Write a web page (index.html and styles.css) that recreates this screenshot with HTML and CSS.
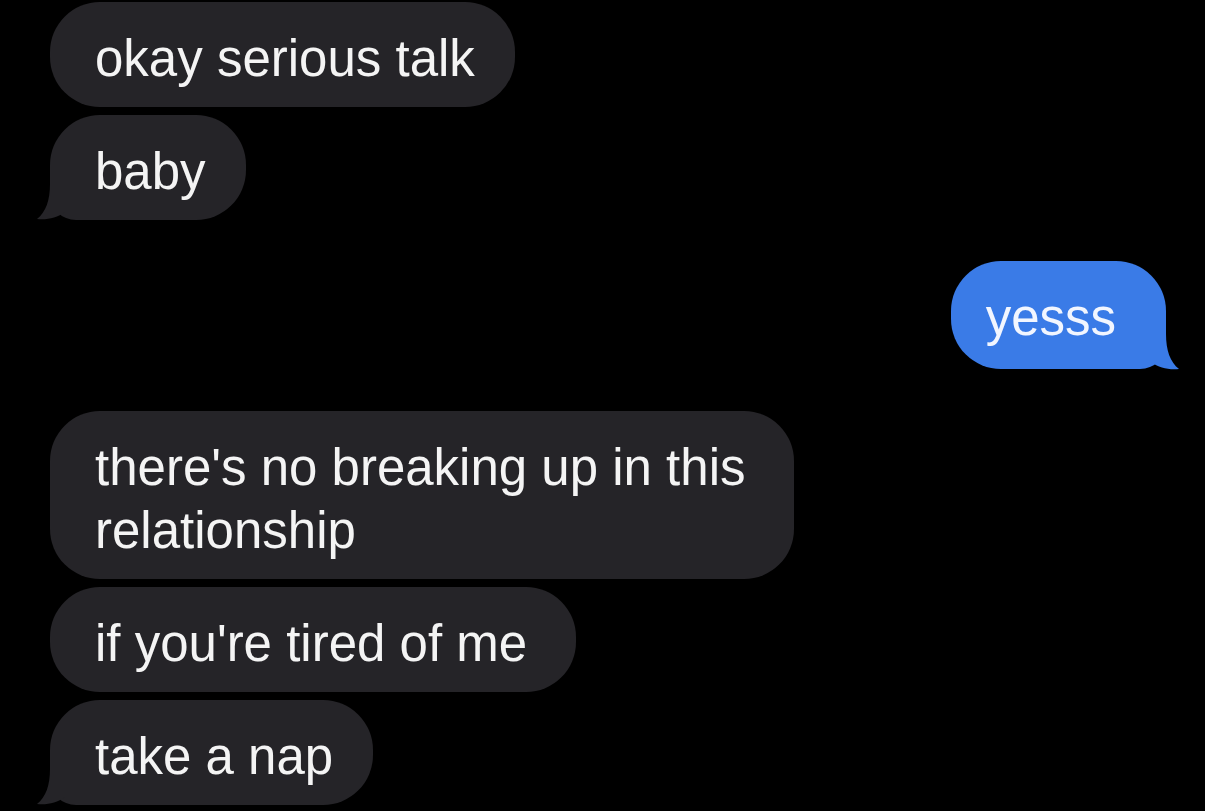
FILE: index.html
```html
<!DOCTYPE html>
<html lang="en">
<head>
  <meta charset="UTF-8" />
  <meta name="viewport" content="width=device-width, initial-scale=1.0" />
  <title>Messages</title>
  <link rel="stylesheet" href="styles.css">
</head>
<body>
  <!-- Conversation -->
  <div class="thread">
    <div class="msg in">okay serious talk</div>
    <div class="msg in has-tail">baby
      <svg class="tail" viewBox="0 0 40 36" width="40" height="36"><path d="M13 0 C13 16 9 28 0 35 C10 36 20 34 28 28 L40 28 L40 0 Z" /></svg>
    </div>
    <div class="msg out has-tail">yesss
      <svg class="tail" viewBox="0 0 40 36" width="40" height="36"><path d="M27 0 C27 16 31 28 40 35 C30 36 20 34 12 28 L0 28 L0 0 Z" /></svg>
    </div>
    <div class="msg in wide">there's no breaking up in this<br>relationship</div>
    <div class="msg in wide">if you're tired of me</div>
    <div class="msg in has-tail">take a nap
      <svg class="tail" viewBox="0 0 40 36" width="40" height="36"><path d="M13 0 C13 16 9 28 0 35 C10 36 20 34 28 28 L40 28 L40 0 Z" /></svg>
    </div>
  </div>
</body>
</html>
```

FILE: styles.css
```css
body {
  margin: 0;
  background-color: #000;
  font-family: "Liberation Sans", Arial, sans-serif;
  color: #f4f4f4;
  overflow: hidden;
}
.thread {
  display: flex;
  flex-direction: column;
  align-items: flex-start;
  gap: 8px;
  padding: 2px 39px 0 50px;
}
.msg {
  position: relative;
  font-size: 51px;
  line-height: 63px;
  padding: 25px 40px 17px 45px;
  border-radius: 50px;
  background-color: #252428;
}
.msg.wide {
  padding-right: 49px;
}
.msg.in.has-tail {
  border-bottom-left-radius: 26px;
}
.msg.out {
  align-self: flex-end;
  background-color: #3a7be7;
  color: #f2f6ff;
  margin: 33px 0 34px 0;
  padding: 25px 50px 20px 35px;
  border-bottom-right-radius: 26px;
}
.tail {
  position: absolute;
  bottom: 0;
  fill: #252428;
}
.msg.in .tail {
  left: -13px;
}
.msg.out .tail {
  right: -13px;
  bottom: -1px;
  fill: #3a7be7;
}
```
